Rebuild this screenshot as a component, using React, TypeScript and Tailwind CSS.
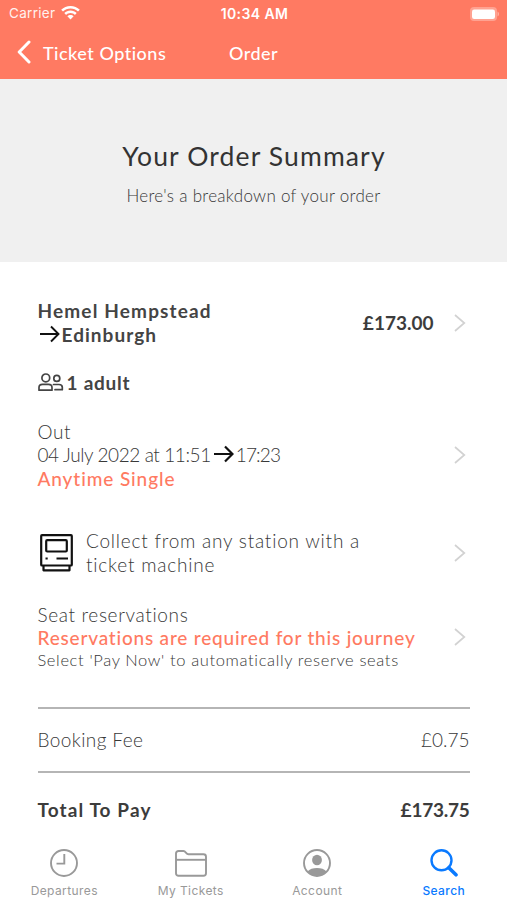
import React from 'react';
import clsx from 'clsx';

interface IconProps {
  className?: string;
}

const WifiIcon: React.FC<IconProps> = ({ className }) => (
  <svg className={className} viewBox="0 0 19 14" fill="currentColor">
    <path d="M9.5 0C13.1 0 16.400 1.400 18.800 3.700L17 5.600C15 3.700 12.400 2.600 9.500 2.600S4 3.700 2 5.600L.2 3.700C2.600 1.400 5.900 0 9.500 0Z" />
    <path d="M9.500 4.500C11.900 4.500 14.100 5.400 15.700 7L13.900 8.900C12.800 7.800 11.200 7.100 9.500 7.100S6.200 7.800 5.100 8.900L3.300 7C4.900 5.400 7.100 4.500 9.500 4.500Z" />
    <path d="M9.500 8.900C10.700 8.900 11.800 9.400 12.600 10.200L9.500 13.500L6.400 10.200C7.200 9.400 8.300 8.900 9.500 8.900Z" />
  </svg>
);

const BatteryIcon: React.FC<IconProps> = ({ className }) => (
  <svg className={className} viewBox="0 0 30 14">
    <rect x="0" y="0" width="27" height="14" rx="4" fill="#fff" opacity="0.3" />
    <rect x="2" y="2.500" width="23" height="9.500" rx="2.200" fill="#fff" />
    <path d="M27.500 4.500C29.500 5.400 29.500 8.600 27.500 9.500Z" fill="#fff" opacity="0.4" />
  </svg>
);

const BackIcon: React.FC<IconProps> = ({ className }) => (
  <svg className={className} viewBox="0 0 14 24" fill="none" stroke="currentColor" strokeWidth="3" strokeLinecap="round" strokeLinejoin="round">
    <path d="M12 2L2.200 12L12 22" />
  </svg>
);

const ChevronIcon: React.FC<IconProps> = ({ className }) => (
  <svg className={className} viewBox="0 0 12 18" fill="none" stroke="currentColor" strokeWidth="1.700">
    <path d="M1 1L10.300 9L1 17" />
  </svg>
);

const ArrowIcon: React.FC<IconProps & { strokeWidth: number }> = ({ className, strokeWidth }) => (
  <svg className={className} viewBox="0 0 20 18" fill="none" stroke="#111" strokeWidth={strokeWidth}>
    <path d="M0 9H18.500M11 1.500L18.500 9L11 16.500" />
  </svg>
);

const PeopleIcon: React.FC<IconProps> = ({ className }) => (
  <svg className={className} viewBox="0 0 26 19" fill="none" stroke="#444" strokeWidth="1.700" strokeLinecap="round" strokeLinejoin="round">
    <circle cx="7.800" cy="4.900" r="3.900" />
    <circle cx="18.800" cy="5.400" r="3" />
    <path d="M1 17.200V14.500C1 12.400 2.500 11.300 4.500 11.300H10.500C12.500 11.300 14 12.400 14 14.500V17.200Z" />
    <path d="M15.500 11.500H21C23 11.500 24.300 12.600 24.300 14.300V16.700H17" />
  </svg>
);

const MachineIcon: React.FC<IconProps> = ({ className }) => (
  <svg className={className} viewBox="0 0 33 38" fill="none" stroke="#111" strokeWidth="2.200" strokeLinejoin="round">
    <rect x="1.200" y="1.200" width="30.600" height="30.300" rx="0.800" />
    <rect x="6.200" y="6.200" width="20.600" height="11.300" rx="1" />
    <path d="M3.500 31.500V36.300H29.500V31.500" />
    <path d="M5.500 24.500H7.700M16.500 24.500H28" />
  </svg>
);

const ClockIcon: React.FC<IconProps> = ({ className }) => (
  <svg className={className} viewBox="0 0 28 28" fill="none" stroke="currentColor" strokeWidth="1.900">
    <circle cx="14" cy="14" r="13" />
    <path d="M14.300 5V14.600H6.500" />
  </svg>
);

const FolderIcon: React.FC<IconProps> = ({ className }) => (
  <svg className={className} viewBox="0 0 32 27" fill="none" stroke="currentColor" strokeWidth="1.900" strokeLinejoin="round">
    <path d="M1 23.200V3.500C1 2 2 1 3.500 1H8.500C10.800 1 11 4.300 13.500 4.300H28.500C30 4.300 31 5.300 31 6.800V23.200C31 24.700 30 25.700 28.500 25.700H3.500C2 25.700 1 24.700 1 23.200Z" />
    <path d="M1 9.800H31" />
  </svg>
);

const AccountIcon: React.FC<IconProps> = ({ className }) => (
  <svg className={className} viewBox="0 0 28 28">
    <circle cx="14" cy="14" r="13" fill="none" stroke="currentColor" strokeWidth="1.900" />
    <ellipse cx="14" cy="11" rx="4.900" ry="5.300" fill="currentColor" />
    <path d="M4.500 22.500C6.500 19.800 10 18.900 14 18.900S21.500 19.800 23.500 22.500C21.300 25.400 18 27 14 27S6.700 25.400 4.500 22.500Z" fill="currentColor" />
  </svg>
);

const SearchIcon: React.FC<IconProps> = ({ className }) => (
  <svg className={className} viewBox="0 0 28 28" fill="none" stroke="currentColor" strokeLinecap="round">
    <circle cx="11.500" cy="11.300" r="10" strokeWidth="2.400" />
    <path d="M18.800 18.700L26 25.800" strokeWidth="3.600" />
  </svg>
);

const tabs = [
  { label: 'Departures', Icon: ClockIcon, iconClass: 'w-7 h-7', active: false },
  { label: 'My Tickets', Icon: FolderIcon, iconClass: 'w-8 h-[27px]', active: false },
  { label: 'Account', Icon: AccountIcon, iconClass: 'w-7 h-7', active: false },
  { label: 'Search', Icon: SearchIcon, iconClass: 'w-7 h-7', active: true },
];

const Chevron = () => <ChevronIcon className="w-3 h-[18px] shrink-0 mr-[4px] text-[#d2d2d2]" />;

const App: React.FC = () => {
  return (
    <div className="w-[507px] h-[900px] overflow-hidden flex flex-col bg-white text-[#383838] font-[Lato,sans-serif] font-light whitespace-nowrap">
      <header className="h-[79px] shrink-0 bg-[#ff7a62] text-white">
        <div className="h-[27px] grid grid-cols-3 items-center pl-[9px] pr-[7px] font-[Inter,sans-serif] text-[13.5px]">
          <div className="flex items-center gap-[6px]">
            <span className="font-normal tracking-[0.3px] opacity-90">Carrier</span>
            <WifiIcon className="w-[19px] h-[14px] relative -top-px" />
          </div>
          <span className="text-center font-semibold text-[14px] tracking-[0.4px]">10:34 AM</span>
          <BatteryIcon className="w-[30px] h-[14px] justify-self-end" />
        </div>
        <div className="h-[52px] grid grid-cols-[1fr_auto_1fr] items-center pl-[17px] pr-[17px] text-[18px] font-medium">
          <button className="flex items-center gap-[12px]">
            <BackIcon className="w-[14px] h-6 relative -top-px" />
            <span className="tracking-[0.5px]">Ticket Options</span>
          </button>
          <h1 className="tracking-[0.4px]">Order</h1>
        </div>
      </header>

      <section className="h-[183px] shrink-0 bg-[#f0f0f0] flex flex-col items-center pt-[60px]">
        <h2 className="text-[26.500px] leading-[34px] font-normal text-[#333] tracking-[1.130px] pl-px">Your Order Summary</h2>
        <p className="mt-[12px] text-[17px] leading-[22px] tracking-[0.3px]">Here's a breakdown of your order</p>
      </section>

      <main className="flex-1 px-[37.500px] text-[19px] leading-[23.700px]">
        <div className="mt-[37px] flex items-center text-[#444] font-bold">
          <div className="flex-1">
            <p className="tracking-[1.15px]">Hemel Hempstead</p>
            <p className="flex items-center">
              <ArrowIcon className="w-5 h-[18px] ml-[2px] mr-[2px] relative -top-px" strokeWidth={1.9} />
              <span className="tracking-[1.05px]">Edinburgh</span>
            </p>
          </div>
          <span className="mr-[20px] text-[#3c3c3c]">£173.00</span>
          <Chevron />
        </div>

        <div className="mt-[25px] flex items-center text-[#444] font-bold">
          <PeopleIcon className="w-[26px] h-[19px] mr-[3px] relative -top-px" />
          <span className="tracking-[0.75px]">1 adult</span>
        </div>

        <div className="mt-[24.500px] flex items-center">
          <div className="flex-1">
            <p className="tracking-[0.6px]">Out</p>
            <p className="flex items-center">
              <span className="tracking-[-0.4px]">04 July 2022 at 11:51</span>
              <ArrowIcon className="w-5 h-[18px] ml-[3px] mr-[2px] relative -top-px" strokeWidth={2.2} />
              <span className="tracking-[-0.9px]">17:23</span>
            </p>
            <p className="font-medium text-[#ff7a62] tracking-[0.9px]">Anytime Single</p>
          </div>
          <Chevron />
        </div>

        <div className="mt-[38.500px] flex items-center">
          <MachineIcon className="w-[33px] h-[38px] ml-[2px] mr-[13.500px]" />
          <p className="flex-1 tracking-[0.78px]">
            Collect from any station with a<br />
            ticket machine
          </p>
          <Chevron />
        </div>

        <div className="mt-[26px] flex items-center">
          <div className="flex-1">
            <p className="tracking-[0.65px]">Seat reservations</p>
            <p className="font-medium text-[#ff7a62] tracking-[0.8px]">Reservations are required for this journey</p>
            <p className="text-[16.500px] leading-[21px] tracking-[0.63px]">Select 'Pay Now' to automatically reserve seats</p>
          </div>
          <Chevron />
        </div>

        <div className="mt-[36px] h-[66px] border-y-2 border-[#b5b5b5] flex items-center justify-between">
          <span className="tracking-[0.4px]">Booking Fee</span>
          <span>£0.75</span>
        </div>

        <div className="mt-[25px] flex items-center justify-between text-[#3c3c3c] font-bold">
          <span className="tracking-[1.1px]">Total To Pay</span>
          <span className="tracking-[-0.25px]">£173.75</span>
        </div>
      </main>

      <nav className="h-[57px] shrink-0 grid grid-cols-4 pl-px font-[Inter,sans-serif] font-normal text-[12px]">
        {tabs.map(({ label, Icon, iconClass, active }) => (
          <button
            key={label}
            className={clsx('flex flex-col items-center', active ? 'text-[#0a7aff] font-medium' : 'text-[#999]')}
          >
            <span className="mt-[6px] h-7 flex items-center">
              <Icon className={iconClass} />
            </span>
            <span className="mt-[6px] leading-4 tracking-[0.4px]">{label}</span>
          </button>
        ))}
      </nav>
    </div>
  );
};

export default App;
